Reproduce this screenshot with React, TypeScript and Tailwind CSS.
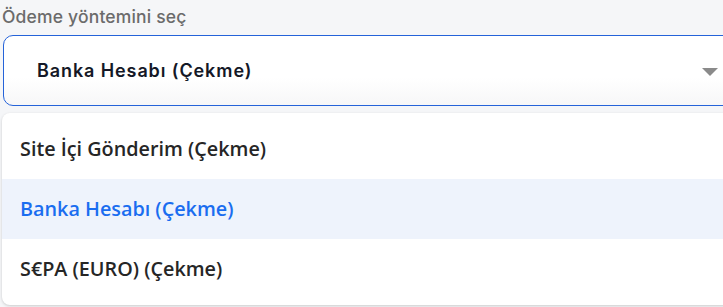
import React from "react";

export default function App() {
  const items = [
    { label: "Site İçi Gönderim (Çekme)", active: false },
    { label: "Banka Hesabı (Çekme)", active: true },
    { label: "S€PA (EURO) (Çekme)", active: false },
  ];
  return (
    <div className="w-[723px] h-[307px] overflow-hidden bg-[#f5f6f8] relative">
      <div className="pl-[2px] pt-[5px] text-[17.5px] leading-[24px] tracking-[0.01em] text-[#6b6b6b] font-medium font-['Inter','Liberation_Sans',sans-serif]">
        Ödeme yöntemini seç
      </div>
      <div className="ml-[3px] mt-[6px] w-[760px] h-[71px] rounded-[10px] border border-[#2563d9] bg-gradient-to-b from-white from-60% to-[#f7f7f8] flex items-center pl-[33px]">
        <span className="text-[18px] tracking-[0.05em] font-semibold text-[#141827] font-['Inter','Liberation_Sans',sans-serif]">
          Banka Hesabı (Çekme)
        </span>
        <span className="ml-auto mr-[44px] mt-[3px] w-0 h-0 border-l-[8px] border-r-[8px] border-t-[8px] border-l-transparent border-r-transparent border-t-[#8a8a8a]" />
      </div>
      <div className="absolute left-[2px] top-[113px] w-[740px] rounded-[8px] bg-white shadow-[0_1px_3px_rgba(0,0,0,0.18)] py-[6px] font-['Open_Sans','Noto_Sans',sans-serif]">
        {items.map((it) => (
          <div
            key={it.label}
            className={
              it.active
                ? "h-[60px] flex items-center pl-[18px] bg-[#eef3fc] text-[#1a6df0] text-[19.8px] font-semibold"
                : "h-[60px] flex items-center pl-[18px] text-[#262626] text-[19.8px] font-semibold"
            }
          >
            {it.label}
          </div>
        ))}
      </div>
    </div>
  );
}
